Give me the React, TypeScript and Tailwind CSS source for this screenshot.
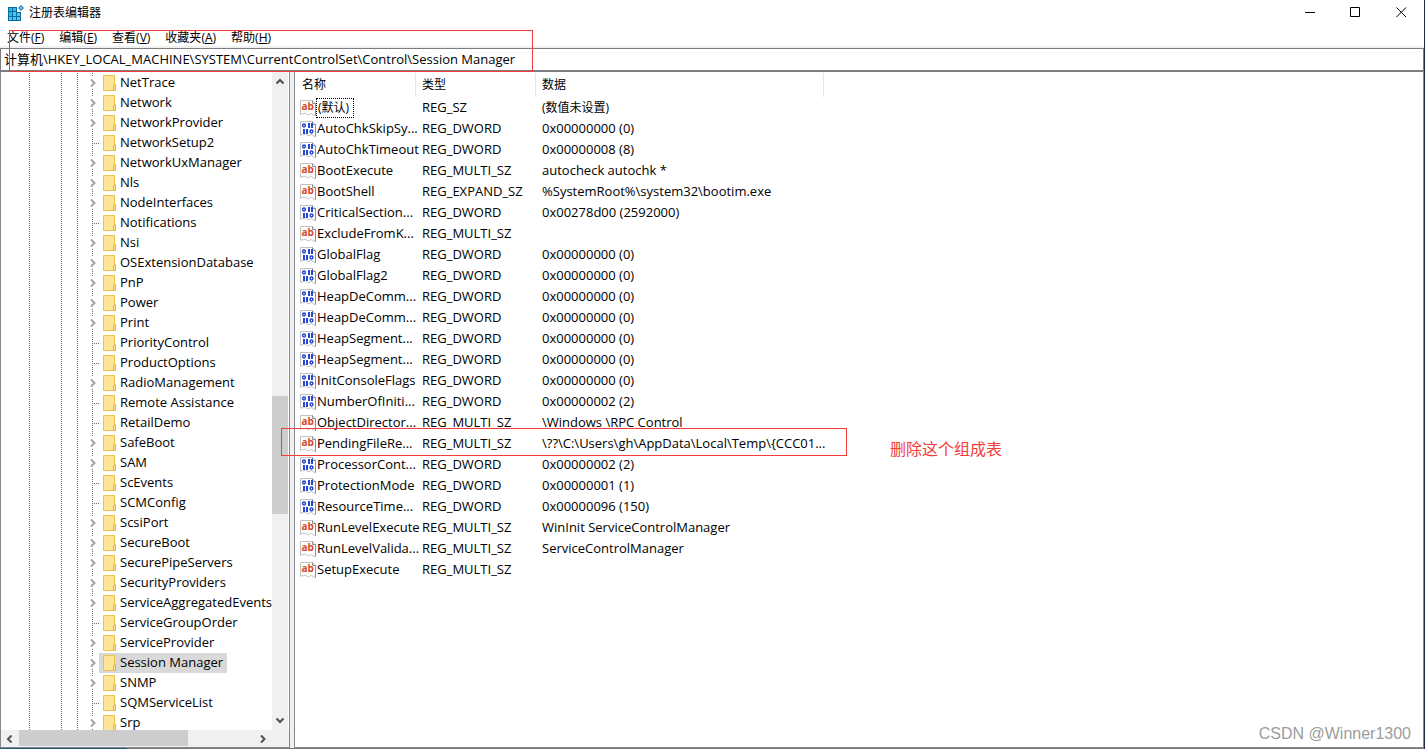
import React from "react";

type Kind = "text" | "binary";

const treeItems: { name: string; leaf?: boolean; selected?: boolean }[] = [
  { name: "NetTrace" },
  { name: "Network" },
  { name: "NetworkProvider" },
  { name: "NetworkSetup2", leaf: true },
  { name: "NetworkUxManager" },
  { name: "Nls" },
  { name: "NodeInterfaces" },
  { name: "Notifications", leaf: true },
  { name: "Nsi" },
  { name: "OSExtensionDatabase" },
  { name: "PnP" },
  { name: "Power" },
  { name: "Print" },
  { name: "PriorityControl", leaf: true },
  { name: "ProductOptions", leaf: true },
  { name: "RadioManagement" },
  { name: "Remote Assistance", leaf: true },
  { name: "RetailDemo", leaf: true },
  { name: "SafeBoot" },
  { name: "SAM" },
  { name: "ScEvents", leaf: true },
  { name: "SCMConfig", leaf: true },
  { name: "ScsiPort" },
  { name: "SecureBoot" },
  { name: "SecurePipeServers" },
  { name: "SecurityProviders" },
  { name: "ServiceAggregatedEvents" },
  { name: "ServiceGroupOrder", leaf: true },
  { name: "ServiceProvider" },
  { name: "Session Manager", selected: true },
  { name: "SNMP" },
  { name: "SQMServiceList", leaf: true },
  { name: "Srp" },
];

const values: [Kind, string, string, string][] = [
  ["text", "(默认)", "REG_SZ", "(数值未设置)"],
  ["binary", "AutoChkSkipSy...", "REG_DWORD", "0x00000000 (0)"],
  ["binary", "AutoChkTimeout", "REG_DWORD", "0x00000008 (8)"],
  ["text", "BootExecute", "REG_MULTI_SZ", "autocheck autochk *"],
  ["text", "BootShell", "REG_EXPAND_SZ", "%SystemRoot%\\system32\\bootim.exe"],
  ["binary", "CriticalSection...", "REG_DWORD", "0x00278d00 (2592000)"],
  ["text", "ExcludeFromK...", "REG_MULTI_SZ", ""],
  ["binary", "GlobalFlag", "REG_DWORD", "0x00000000 (0)"],
  ["binary", "GlobalFlag2", "REG_DWORD", "0x00000000 (0)"],
  ["binary", "HeapDeComm...", "REG_DWORD", "0x00000000 (0)"],
  ["binary", "HeapDeComm...", "REG_DWORD", "0x00000000 (0)"],
  ["binary", "HeapSegment...", "REG_DWORD", "0x00000000 (0)"],
  ["binary", "HeapSegment...", "REG_DWORD", "0x00000000 (0)"],
  ["binary", "InitConsoleFlags", "REG_DWORD", "0x00000000 (0)"],
  ["binary", "NumberOfIniti...", "REG_DWORD", "0x00000002 (2)"],
  ["text", "ObjectDirector...", "REG_MULTI_SZ", "\\Windows \\RPC Control"],
  ["text", "PendingFileRe...", "REG_MULTI_SZ", "\\??\\C:\\Users\\gh\\AppData\\Local\\Temp\\{CCC01..."],
  ["binary", "ProcessorCont...", "REG_DWORD", "0x00000002 (2)"],
  ["binary", "ProtectionMode", "REG_DWORD", "0x00000001 (1)"],
  ["binary", "ResourceTime...", "REG_DWORD", "0x00000096 (150)"],
  ["text", "RunLevelExecute", "REG_MULTI_SZ", "WinInit ServiceControlManager"],
  ["text", "RunLevelValida...", "REG_MULTI_SZ", "ServiceControlManager"],
  ["text", "SetupExecute", "REG_MULTI_SZ", ""],
];

const menus = [
  ["文件", "F"],
  ["编辑", "E"],
  ["查看", "V"],
  ["收藏夹", "A"],
  ["帮助", "H"],
];

function AppIcon() {
  return (
    <svg width="16" height="16" viewBox="0 0 16 16" shapeRendering="crispEdges" aria-hidden="true">
      <path d="M0 2h9v5h4v9H0z" fill="#0b6a9c" />
      <path d="M1 3h3v3H1zM5 3h3v3H5zM1 7h3v4H1z" fill="#35b6e8" />
      <path d="M5 7h3v4H5zM9 8h3v3H9zM1 12h3v3H1zM5 12h3v3H5zM9 12h3v3H9z" fill="#4cc6f2" />
      <path d="M13 0l3 3-3 3-3-3z" fill="#1a84b8" shapeRendering="auto" />
      <path d="M13 1.500l1.500 1.500L13 4.500 11.500 3z" fill="#6cd2f6" shapeRendering="auto" />
    </svg>
  );
}

function FolderIcon() {
  return (
    <svg width="13" height="16" viewBox="0 0 13 16" className="block shrink-0" aria-hidden="true">
      <path d="M.5 .5h11v9.500h1v5.500H.5z" fill="#ffe597" stroke="#e9c44a" />
      <path d="M10.500 15.500v-4.500l1-1.500h1v6z" fill="#ffe08a" stroke="#e3b93a" />
    </svg>
  );
}

function ValueIcon({ kind }: { kind: Kind }) {
  return (
    <svg width="16" height="16" viewBox="0 0 16 16" className="block shrink-0 overflow-visible" aria-hidden="true">
      <path
        d="M.5 .5h12l3 3v12l-2-.6-2-1.400-2 .8-2 .4-2-1.700-2 .8-1.500-.3-1.500 1z"
        fill="#fdfdfd"
        stroke="#c2c2c2"
      />
      <path d="M12.500 .5v3h3M15.500 3.500v12" fill="none" stroke="#8f8f8f" />
      {kind === "text" ? (
        <text x="1.500" y="10" fontSize="10" fontWeight="700" fontFamily="Open Sans" fill="#d64a26">
          ab
        </text>
      ) : (
        <g fill="#2647cf">
          <ellipse cx="4" cy="4.500" rx="1.400" ry="1.400" fill="none" stroke="#2647cf" strokeWidth="1.500" />
          <path d="M8 2h2v5H8zM11 2h2v5h-2zM3 8h2v5H3zM6 8h2v5H6z" />
          <ellipse cx="11.500" cy="10.500" rx="1.400" ry="1.400" fill="none" stroke="#2647cf" strokeWidth="1.500" />
        </g>
      )}
    </svg>
  );
}

function Chevron({ className, d }: { className?: string; d: string }) {
  return (
    <svg width="8" height="8" viewBox="0 0 8 8" className={className} fill="none" stroke="currentColor" strokeWidth="2" aria-hidden="true">
      <path d={d} />
    </svg>
  );
}

const RIGHT = "M2 .5l3.500 3.500L2 7.500";
const LEFT = "M5.500 .5L2 4l3.500 3.500";
const UP = "M.5 5.500L4 2l3.500 3.500";
const DOWN = "M.5 2.500L4 6l3.500-3.500";

function Guide({ className }: { className: string }) {
  return (
    <span
      className={`w-px shrink-0 bg-[repeating-linear-gradient(to_bottom,#707070_0_1px,transparent_1px_2px)] ${className}`}
    />
  );
}

function Tree() {
  return (
    <ul className="min-w-0 flex-1 overflow-hidden pt-px">
      {treeItems.map((item) => (
        <li key={item.name} className="flex h-5 w-max items-stretch">
          <Guide className="ml-7 mr-[31px]" />
          <Guide className="mr-[15px]" />
          <Guide className="mr-[10px]" />
          {item.leaf ? (
            <span className="flex w-[11px] shrink-0 items-center pl-1">
              <Guide className="h-5" />
              <span className="h-px w-[6px] bg-[repeating-linear-gradient(to_right,transparent_0_1px,#707070_1px_2px)]" />
            </span>
          ) : (
            <button
              aria-label={`展开 ${item.name}`}
              className="flex w-[11px] shrink-0 flex-col items-center justify-between pr-0.5 text-[#a3a3a3]"
            >
              <Guide className="h-1" />
              <Chevron d={RIGHT} />
              <Guide className="h-1" />
            </button>
          )}
          <button className={`flex items-center gap-1 whitespace-nowrap px-1 ${item.selected ? "bg-[#d9d9d9]" : ""}`}>
            <FolderIcon />
            <span className="pb-0.5 leading-[18px]">{item.name}</span>
          </button>
        </li>
      ))}
    </ul>
  );
}

export default function App() {
  return (
    <div className="relative flex h-screen flex-col overflow-hidden border-r border-[#1f2a44] bg-white font-['Open_Sans','Noto_Sans_CJK_SC',sans-serif] text-[13px] text-black">
      <header className="flex h-[25px] shrink-0 items-center justify-between pl-2">
        <div className="flex items-center gap-[5px]">
          <AppIcon />
          <h1 className="text-xs">注册表编辑器</h1>
        </div>
        <div className="flex h-full items-center">
          <button aria-label="最小化" className="flex w-[45px] justify-center">
            <svg width="11" height="11" viewBox="0 0 11 11"><path d="M0 5.500h10" stroke="#000" /></svg>
          </button>
          <button aria-label="最大化" className="flex w-[45px] justify-center">
            <svg width="11" height="11" viewBox="0 0 11 11"><path d="M.5 .5h9v9h-9z" fill="none" stroke="#000" /></svg>
          </button>
          <button aria-label="关闭" className="flex w-[46px] justify-center">
            <svg width="11" height="11" viewBox="0 0 11 11"><path d="M.5 .5l9.500 9.500M10 .5l-9.500 9.500" fill="none" stroke="#000" /></svg>
          </button>
        </div>
      </header>

      <nav className="flex h-[23px] shrink-0 items-center gap-[15px] border-b-2 border-[#f0f0f0] pl-[7px] pt-1 text-xs">
        {menus.map(([label, key]) => (
          <button key={key} className="whitespace-nowrap">
            {label}(<u>{key}</u>)
          </button>
        ))}
      </nav>

      <div className="flex h-6 shrink-0 border border-b-2 border-[#7e7d82]">
        <input
          aria-label="注册表路径"
          defaultValue="计算机\HKEY_LOCAL_MACHINE\SYSTEM\CurrentControlSet\Control\Session Manager"
          className="min-w-0 flex-1 bg-transparent pl-[3px] outline-none"
        />
      </div>

      <main className="flex min-h-0 flex-1 bg-[#f0f0f0]">
        <section className="flex w-[290px] shrink-0 flex-col border-x border-b border-[#828790] bg-white">
          <div className="flex min-h-0 flex-1 overflow-hidden">
            <Tree />
            <div className="mr-px flex w-4 shrink-0 flex-col bg-[#f0f0f0] text-[#505050]">
              <button aria-label="向上滚动" className="flex h-5 items-center justify-center"><Chevron d={UP} /></button>
              <div className="flex flex-1 flex-col">
                <span className="flex-[304]" />
                <span className="flex-[119] bg-[#cdcdcd]" />
                <span className="flex-[196]" />
              </div>
              <button aria-label="向下滚动" className="flex h-5 items-center justify-center"><Chevron d={DOWN} /></button>
            </div>
          </div>
          <div className="flex h-[17px] shrink-0 bg-[#f0f0f0] text-[#505050]">
            <button aria-label="向左滚动" className="flex w-[18px] items-center justify-center"><Chevron d={LEFT} /></button>
            <div className="flex flex-1 pb-px">
              <span className="flex-[169] bg-[#cdcdcd]" />
              <span className="flex-[66]" />
            </div>
            <button aria-label="向右滚动" className="mr-[17px] flex w-[18px] items-center justify-center"><Chevron d={RIGHT} /></button>
          </div>
        </section>

        <section className="ml-1 min-w-0 flex-1 overflow-hidden border-x border-b border-[#828790] bg-white">
          <table className="mt-px w-[529px] table-fixed border-separate border-spacing-0 text-left">
            <colgroup>
              <col className="w-[121px]" />
              <col className="w-[120px]" />
              <col className="w-[288px]" />
            </colgroup>
            <thead>
              <tr className="h-6 text-xs">
                <th className="border-r border-[#e5e5e5] p-0 pl-[7px] font-normal">名称</th>
                <th className="border-r border-[#e5e5e5] p-0 pl-[6px] font-normal">类型</th>
                <th className="border-r border-[#e5e5e5] p-0 pl-[6px] font-normal">数据</th>
              </tr>
            </thead>
            <tbody>
              {values.map(([kind, name, type, data], i) => (
                <tr key={i} className="h-[21px] whitespace-nowrap leading-[18px]">
                  <td className="p-0 pl-[5px]">
                    <div className="flex h-[21px] items-center">
                      <ValueIcon kind={kind} />
                      {i === 0 ? (
                        <span className="border border-dotted border-black px-px pr-1 text-xs leading-[18px]">{name}</span>
                      ) : (
                        <span className="pb-0.5 pl-px">{name}</span>
                      )}
                    </div>
                  </td>
                  <td className="p-0 pb-0.5 pl-[6px]">{type}</td>
                  <td className={i === 0 ? "p-0 pl-[6px] text-xs leading-[18px]" : "p-0 pb-0.5 pl-[6px]"}>{data}</td>
                </tr>
              ))}
            </tbody>
          </table>
        </section>
      </main>

      <footer className="flex h-px shrink-0 bg-[#77777c]">
        <span className="w-[127px] bg-[#1d5c70]" />
      </footer>

      <div className="pointer-events-none absolute left-[9px] top-[30px] h-[42px] w-[524px] border border-[#f53b3b]" />
      <div className="pointer-events-none absolute left-[281px] top-[428px] h-[28px] w-[566px] border border-[#f53b3b]" />
      <p className="absolute left-[890px] top-[437px] text-base leading-6 text-[#f53b3b]">删除这个组成表</p>
      <p className="absolute bottom-[3px] right-[13px] font-['Liberation_Sans',sans-serif] text-base leading-6 text-[#9c9c9c]">
        CSDN @Winner1300
      </p>
    </div>
  );
}
